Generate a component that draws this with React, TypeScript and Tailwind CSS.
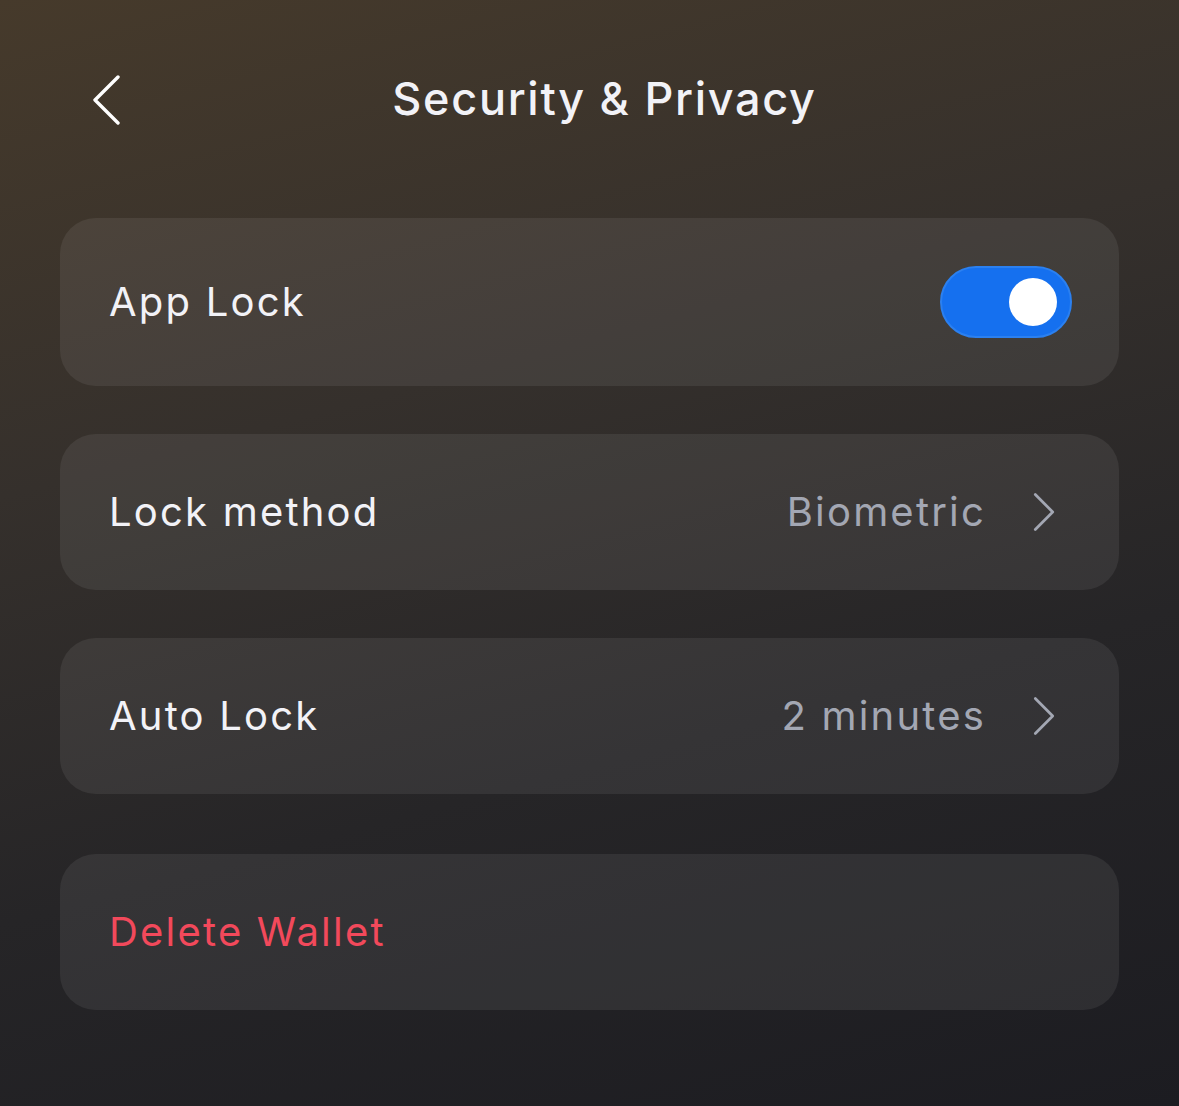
import React from "react";

function Chevron({ className }: { className?: string }) {
  return (
    <svg viewBox="0 0 24 42" className={className} fill="none" stroke="currentColor" strokeWidth="3" strokeLinecap="round" strokeLinejoin="round">
      <path d="M2.5 2 L21.5 21 L2.5 40" />
    </svg>
  );
}

function Card({ children, h, pr }: { children: React.ReactNode; h: string; pr: string }) {
  return (
    <div className={`flex items-center justify-between rounded-[36px] bg-white/[0.07] pl-[49px] ${pr} ${h}`}>
      {children}
    </div>
  );
}

export default function App() {
  return (
    <div
      className="relative w-[1179px] h-[1106px] overflow-hidden bg-[linear-gradient(165deg,#463a2b_0%,#35302c_35%,#262527_65%,#1c1c21_100%)] text-[#f2f2f7]"
      style={{ fontFamily: 'Inter, "Noto Sans", sans-serif' }}
    >
      <div className="flex items-center h-[100px] mt-[50px] px-[92px] relative">
        <svg viewBox="0 0 30 50" className="w-[30px] h-[50px] text-white" fill="none" stroke="currentColor" strokeWidth="3.4" strokeLinecap="round" strokeLinejoin="round">
          <path d="M26 2 L3 25 L26 48" />
        </svg>
        <div className="absolute inset-0 flex items-center justify-center">
          <span className="text-[45px] font-medium tracking-[1.7px] pl-[30px] pb-[2px]">Security &amp; Privacy</span>
        </div>
      </div>

      <div className="flex flex-col px-[60px] mt-[68px]">
        <Card h="h-[168px]" pr="pr-[47px]">
          <span className="text-[40px] tracking-[2.2px]">App Lock</span>
          <div className="w-[132px] h-[72px] rounded-full bg-[#1570ef] border-2 border-[#2b80f0] flex items-center justify-end pr-[13px]">
            <div className="w-[48px] h-[48px] rounded-full bg-white" />
          </div>
        </Card>
        <div className="h-[48px]" />
        <Card h="h-[156px]" pr="pr-[64px]">
          <span className="text-[40px] tracking-[2.2px]">Lock method</span>
          <div className="flex items-center gap-[47px] text-[#a3a7b3]">
            <span className="text-[40px] tracking-[2.2px]">Biometric</span>
            <Chevron className="w-[22px] h-[40px]" />
          </div>
        </Card>
        <div className="h-[48px]" />
        <Card h="h-[156px]" pr="pr-[64px]">
          <span className="text-[40px] tracking-[2.2px]">Auto Lock</span>
          <div className="flex items-center gap-[47px] text-[#a3a7b3]">
            <span className="text-[40px] tracking-[2.2px]">2 minutes</span>
            <Chevron className="w-[22px] h-[40px]" />
          </div>
        </Card>
        <div className="h-[60px]" />
        <Card h="h-[156px]" pr="pr-[64px]">
          <span className="text-[40px] tracking-[2.2px] text-[#f2495b]">Delete Wallet</span>
        </Card>
      </div>
    </div>
  );
}
